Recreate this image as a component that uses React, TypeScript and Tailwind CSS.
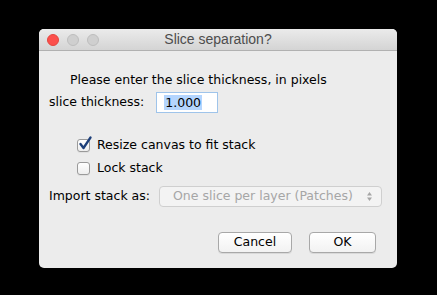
const font = { fontFamily: '"DejaVu Sans", "Liberation Sans", sans-serif' };

function Checkbox({ checked }: { checked: boolean }) {
    return (
        <span className="relative inline-block w-[13px] h-[13px] rounded-[3px] border border-[#9a9a9a] bg-gradient-to-b from-white to-[#eeeeee] shadow-[0_1px_0_rgba(0,0,0,0.05)]">
            {checked && (
                <svg className="absolute -top-[4px] left-[0px]" width="15" height="15" viewBox="0 0 15 15">
                    <path d="M2.5 8 L5.5 12 L12.5 1.5" fill="none" stroke="#1d3f7a" strokeWidth="2.3" strokeLinecap="round" strokeLinejoin="round" />
                </svg>
            )}
        </span>
    );
}

function Button({ label, width }: { label: string; width: string }) {
    return (
        <button className={`${width} h-[21px] rounded-[4px] border border-[#a8a8a8] bg-gradient-to-b from-white to-[#f2f2f2] text-[12.5px] text-black leading-none shadow-[0_1px_0_rgba(0,0,0,0.08)]`}>
            {label}
        </button>
    );
}

export default function App() {
    return (
        <div className="w-[437px] h-[295px] bg-black pt-[29px] pl-[39px]" style={font}>
            <div className="w-[358px] h-[239px] rounded-[5px] bg-[#ececec] overflow-hidden flex flex-col">
                {/* Title bar */}
                <div className="relative h-[22px] flex items-center justify-center bg-gradient-to-b from-[#ebebeb] to-[#d4d4d4] border-b border-[#b1b1b1]">
                    <div className="absolute left-[8px] top-[5px] flex gap-[8px]">
                        <span className="w-[12px] h-[12px] rounded-full bg-[#fc4f4b] border border-[#e2463f]" />
                        <span className="w-[12px] h-[12px] rounded-full bg-[#cfcfcf] border border-[#bdbdbd]" />
                        <span className="w-[12px] h-[12px] rounded-full bg-[#cfcfcf] border border-[#bdbdbd]" />
                    </div>
                    <span className="text-[14px] text-[#4d4d4d]" style={{ fontFamily: '"Liberation Sans", sans-serif' }}>
                        Slice separation?
                    </span>
                </div>

                {/* Body */}
                <div className="flex flex-col text-[12.5px] text-black">
                    <div className="mt-[21px] pl-[31px] leading-[16px]">Please enter the slice thickness, in pixels</div>

                    <div className="mt-[4px] pl-[10px] flex items-center h-[21px]">
                        <span>slice thickness:</span>
                        <div className="ml-[12px] w-[62px] h-[21px] border border-[#9fc4ea] bg-white flex items-center pl-[7px]">
                            <span className="bg-[#b4d5fe] px-[1px] leading-[15px]">1.000</span>
                        </div>
                    </div>

                    <div className="mt-[26px] pl-[38px] flex flex-col gap-[10px]">
                        <label className="flex items-center gap-[7px] h-[13px]">
                            <Checkbox checked />
                            <span>Resize canvas to fit stack</span>
                        </label>
                        <label className="flex items-center gap-[7px] h-[13px]">
                            <Checkbox checked={false} />
                            <span>Lock stack</span>
                        </label>
                    </div>

                    <div className="mt-[11px] pl-[10px] flex items-center h-[21px]">
                        <span>Import stack as:</span>
                        <div className="ml-[9px] w-[223px] h-[21px] rounded-[4px] border border-[#cfcfcf] bg-[#f3f3f3] flex items-center pl-[13px] pr-[8px]">
                            <span className="flex-1 text-[#a6a6a6]">One slice per layer (Patches)</span>
                            <svg width="7" height="11" viewBox="0 0 7 11">
                                <path d="M3.5 1 L6 4.5 L1 4.5 Z" fill="#a6a6a6" />
                                <path d="M3.5 10 L6 6.5 L1 6.5 Z" fill="#a6a6a6" />
                            </svg>
                        </div>
                    </div>

                    <div className="mt-[25px] pr-[21px] flex justify-end gap-[17px]">
                        <Button label="Cancel" width="w-[74px]" />
                        <Button label="OK" width="w-[67px]" />
                    </div>
                </div>
            </div>
        </div>
    );
}
